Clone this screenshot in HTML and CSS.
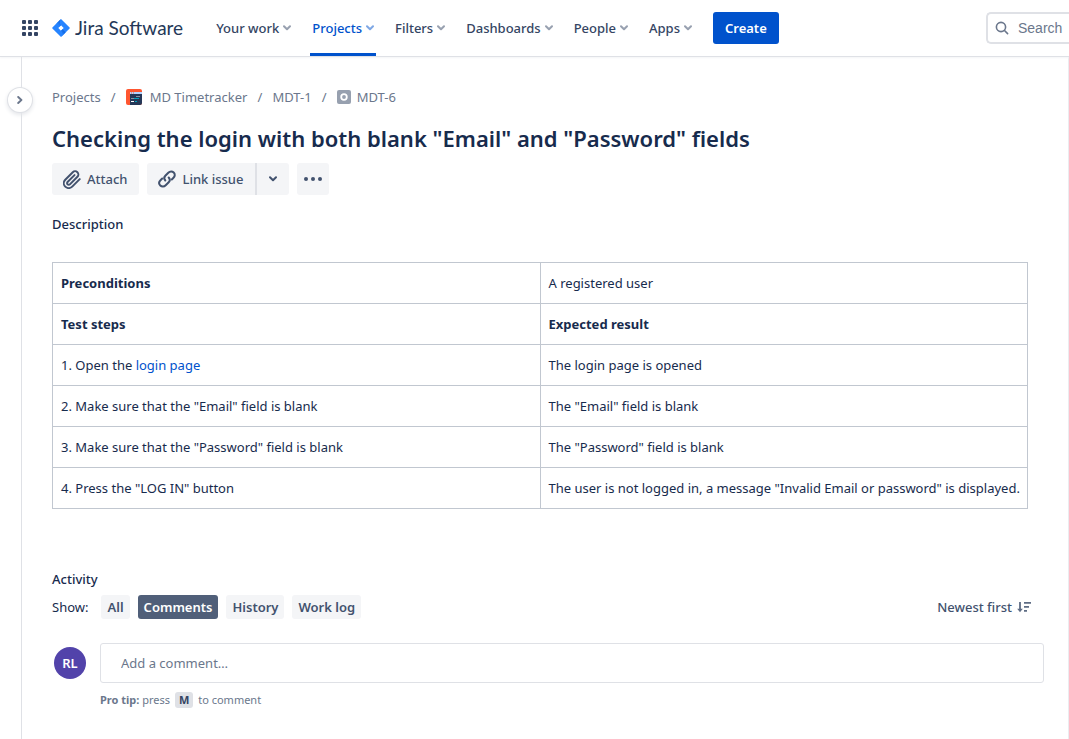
FILE: index.html
```html
<!DOCTYPE html>
<html lang="en">
<head>
<meta charset="utf-8">
<title>MDT-6 - Jira Software</title>
<link rel="stylesheet" href="styles.css">
</head>
<body>
<header class="topbar">
  <button class="switcher" aria-label="Switch to another product">
    <svg width="16" height="16" viewBox="0 0 16 16" fill="#344563"><rect width="4" height="4" rx="1"/><rect x="6" width="4" height="4" rx="1"/><rect x="12" width="4" height="4" rx="1"/><rect y="6" width="4" height="4" rx="1"/><rect x="6" y="6" width="4" height="4" rx="1"/><rect x="12" y="6" width="4" height="4" rx="1"/><rect y="12" width="4" height="4" rx="1"/><rect x="6" y="12" width="4" height="4" rx="1"/><rect x="12" y="12" width="4" height="4" rx="1"/></svg>
  </button>
  <a class="brand" href="#">
    <svg width="18" height="18" viewBox="0 0 18 18"><defs><linearGradient id="g1" x1="1" y1="0" x2="0.4" y2="0.8"><stop offset="0" stop-color="#0052cc"/><stop offset="1" stop-color="#2684ff"/></linearGradient></defs><path d="M9 0 17.6 8.4Q18 9 17.600 9.600L9 18 .4 9.600Q0 9 .4 8.400ZM9 6.300 6.300 9 9 11.700 11.700 9Z" fill="#2684ff" fill-rule="evenodd"/><path d="M9 6.300C7.300 4.600 7.300 2 9 0L4.400 4.600 7.600 7.700Z" fill="url(#g1)"/><path d="M9 11.700C10.700 13.400 10.700 16 9 18L13.600 13.400 10.400 10.300Z" fill="url(#g1)"/></svg>
    <span>Jira Software</span>
  </a>
  <nav class="nav">
    <button class="nav-item">Your work<svg class="chev" viewBox="0 0 8 6"><path d="M1 1.200 4 4.200 7 1.200"/></svg></button>
    <button class="nav-item active">Projects<svg class="chev" viewBox="0 0 8 6"><path d="M1 1.200 4 4.200 7 1.200"/></svg></button>
    <button class="nav-item">Filters<svg class="chev" viewBox="0 0 8 6"><path d="M1 1.200 4 4.200 7 1.200"/></svg></button>
    <button class="nav-item">Dashboards<svg class="chev" viewBox="0 0 8 6"><path d="M1 1.200 4 4.200 7 1.200"/></svg></button>
    <button class="nav-item">People<svg class="chev" viewBox="0 0 8 6"><path d="M1 1.200 4 4.200 7 1.200"/></svg></button>
    <button class="nav-item">Apps<svg class="chev" viewBox="0 0 8 6"><path d="M1 1.200 4 4.200 7 1.200"/></svg></button>
  </nav>
  <button class="create">Create</button>
  <label class="search">
    <svg width="14" height="14" viewBox="0 0 14 14" fill="none" stroke="#6b778c" stroke-width="1.600" stroke-linecap="round"><circle cx="6" cy="6" r="4.600"/><path d="M9.500 9.500 12.600 12.600"/></svg>
    <input type="text" placeholder="Search" aria-label="Search">
  </label>
</header>
<div class="page">
  <aside class="rail">
    <button class="expand" aria-label="Expand sidebar"><svg width="6" height="8" viewBox="0 0 6 8"><path d="M1.200 1 4.400 4 1.200 7" fill="none" stroke="#6b778c" stroke-width="1.900" stroke-linecap="round" stroke-linejoin="round"/></svg></button>
  </aside>
  <main class="issue">
    <nav class="crumbs" aria-label="Breadcrumbs">
      <a href="#">Projects</a><span class="sep">/</span>
      <a href="#"><svg class="project-icon" width="16" height="16" viewBox="0 0 16 16"><rect width="16" height="16" rx="2" fill="#ff5630"/><path d="M4 4H16V14a2 2 0 0 1-2 2H4Z" fill="#253858"/><path d="M4 3H16V5H4Z" fill="#b3d4ff"/><path d="M5 3.500H6V4.500H5ZM7 3.500H8V4.500H7Z" fill="#ff5630"/><path d="M10 7.500H14" stroke="#8993a4"/><path d="M5 9.500H8" stroke="#8993a4"/><path d="M8 9.500H13M9 12.500H11" stroke="#00a3bf"/><path d="M5 12.500H8" stroke="#fff"/></svg>MD Timetracker</a><span class="sep">/</span>
      <a href="#">MDT-1</a><span class="sep">/</span>
      <a class="subtask" href="#"><svg width="14" height="14" viewBox="0 0 14 14"><rect width="14" height="14" rx="2" fill="#97a0af"/><circle cx="7" cy="7" r="2.800" fill="none" stroke="#fff" stroke-width="1.800"/></svg>MDT-6</a>
    </nav>
    <h1>Checking the login with both blank "Email" and "Password" fields</h1>
    <div class="actions">
      <button class="btn"><svg width="18" height="19" viewBox="1 0 22 23" fill="none" stroke="#42526e" stroke-width="2.400" stroke-linecap="round" stroke-linejoin="round"><path d="M21.440 11.050l-9.190 9.190a6 6 0 0 1-8.490-8.490l9.190-9.190a4 4 0 0 1 5.660 5.660l-9.200 9.190a2 2 0 0 1-2.830-2.830l8.490-8.480"/></svg>Attach</button>
      <div class="split">
        <button class="btn"><svg width="18" height="18" viewBox="0 0 18 18" fill="none" stroke="#42526e" stroke-width="2" stroke-linecap="round" stroke-linejoin="round"><path d="M7.300 10.500C5.900 8.900 6 7 7.300 5.700L10.300 2.700C12 1 14.200 1 15.700 2.500S17.100 6.200 15.500 7.800L13.800 9.500"/><path d="M10.700 7.500C12.100 9.100 12 11 10.700 12.300L7.700 15.300C6 17 3.800 17 2.300 15.500S.9 11.800 2.500 10.200L4.200 8.500"/></svg>Link issue</button>
        <button class="btn more" aria-label="More link options"><svg class="chev dark" viewBox="0 0 8 6"><path d="M1 1.200 4 4.200 7 1.200"/></svg></button>
      </div>
      <button class="btn dots" aria-label="More actions"><svg width="18" height="4" viewBox="0 0 18 4" fill="#42526e"><circle cx="2" cy="2" r="2"/><circle cx="9" cy="2" r="2"/><circle cx="16" cy="2" r="2"/></svg></button>
    </div>
    <h2>Description</h2>
    <table class="steps">
      <tr><th>Preconditions</th><td>A registered user</td></tr>
      <tr><th>Test steps</th><th>Expected result</th></tr>
      <tr><td>1. Open the <a href="#">login page</a></td><td>The login page is opened</td></tr>
      <tr><td>2. Make sure that the "Email" field is blank</td><td>The "Email" field is blank</td></tr>
      <tr><td>3. Make sure that the "Password" field is blank</td><td>The "Password" field is blank</td></tr>
      <tr><td>4. Press the "LOG IN" button</td><td>The user is not logged in, a message "Invalid Email or password" is displayed.</td></tr>
    </table>
    <h2>Activity</h2>
    <div class="filters">
      <span class="show">Show:</span>
      <button class="chip">All</button>
      <button class="chip selected">Comments</button>
      <button class="chip">History</button>
      <button class="chip">Work log</button>
      <button class="sort">Newest first<svg width="14" height="12" viewBox="0 0 14 12" fill="none" stroke="#5e6c84" stroke-width="1.800"><path d="M3 1V9"/><path d="M.2 7.800H5.800L3 11.200Z" fill="#5e6c84" stroke="none"/><path d="M7 1.900H14M7 5.900H12M7 9.900H10"/></svg></button>
    </div>
    <div class="comment">
      <span class="avatar">RL</span>
      <div class="composer">
        <input type="text" placeholder="Add a comment…" aria-label="Add a comment">
        <p class="tip"><strong>Pro tip:</strong> press <kbd>M</kbd> to comment</p>
      </div>
    </div>
  </main>
</div>
</body>
</html>
```
FILE: styles.css
```css
* { box-sizing: border-box; }
body {
  margin: 0;
  min-height: 100vh;
  display: flex;
  flex-direction: column;
  font: 13px/20px "Noto Sans", "Open Sans", sans-serif;
  color: #172b4d;
  background: #fff;
}
button, input { font: inherit; color: inherit; border: 0; padding: 0; background: none; }
svg { display: block; flex: none; }
a { color: #0052cc; text-decoration: none; }

.topbar {
  position: relative;
  display: flex;
  align-items: center;
  height: 56px;
  padding-left: 22px;
  box-shadow: 0 1px 0 #dfe1e6, 0 2px 2px #f4f5f7;
}
.brand {
  display: flex;
  align-items: center;
  gap: 5px;
  margin-left: 14px;
  font: 19px/24px Lato, sans-serif;
  color: #253858;
}
.nav { display: flex; align-self: stretch; margin-left: 31px; gap: 17px; }
.nav-item {
  display: flex;
  align-items: center;
  gap: 4px;
  padding: 0 2px;
  font-weight: 500;
  color: #344563;
  white-space: nowrap;
}
.nav-item.active { color: #0052cc; box-shadow: inset 0 -3px #0052cc; }
.chev {
  width: 8px;
  height: 6px;
  fill: none;
  stroke: currentColor;
  stroke-width: 2;
  stroke-linecap: round;
  stroke-linejoin: round;
  opacity: .5;
}
.chev.dark { opacity: 1; }
.create {
  height: 32px;
  margin-left: 19px;
  padding: 0 12px;
  border-radius: 3px;
  background: #0052cc;
  color: #fff;
  font-weight: 600;
}
.search {
  display: flex;
  align-items: center;
  gap: 9px;
  width: 83px;
  height: 32px;
  margin-left: auto;
  padding-left: 7px;
  border: 2px solid #dfe1e6;
  border-right: 0;
  border-radius: 5px 0 0 5px;
}
.search input { width: 100%; min-width: 0; font: 14px/20px "Liberation Sans", sans-serif; }
input::placeholder { color: #6b778c; opacity: 1; }

.page { display: flex; flex: 1; border-right: 1px solid #ebecf0; }
.rail { position: relative; flex: none; width: 22px; border-right: 1px solid #dfe1e6; }
.expand {
  position: absolute;
  top: 32px;
  left: 8px;
  display: grid;
  place-items: center;
  width: 24px;
  height: 24px;
  border-radius: 50%;
  background: #fff;
  box-shadow: 0 0 0 1px #dfe1e6, 0 2px 4px 1px #e4e6ea;
}
.issue { flex: 1; min-width: 0; padding: 31px 24px 24px 30px; }

.crumbs { display: flex; align-items: center; }
.crumbs a { display: flex; align-items: center; gap: 8px; color: #6b778c; }
.crumbs .subtask { gap: 6px; }
.crumbs .sep { width: 25px; text-align: center; color: #6b778c; }
h1 { margin: 16px 0 10px; font-size: 22px; line-height: 30px; font-weight: 600; }
.actions { display: flex; gap: 8px; }
.btn {
  display: flex;
  align-items: center;
  gap: 6px;
  height: 32px;
  padding: 0 12px 0 11px;
  border-radius: 3px;
  background: #f4f5f7;
  color: #42526e;
  font-weight: 500;
}
.split { display: flex; }
.split .btn:first-child { border-radius: 3px 0 0 3px; border-right: 2px solid #dfe1e6; }
.split .more { width: 32px; justify-content: center; padding: 0; border-radius: 0 3px 3px 0; }
.dots { width: 32px; justify-content: center; padding: 0; }
h2 { margin: 19px 0 0; font-size: 13px; line-height: 20px; font-weight: 500; }

.steps {
  width: calc(100% - 16px);
  margin: 28px 0 60px;
  table-layout: fixed;
  border-collapse: collapse;
}
.steps th, .steps td {
  height: 41px;
  padding: 0 8px;
  border: 1px solid #c1c7d0;
  text-align: left;
  white-space: nowrap;
}
.steps th { font-weight: 700; }

.filters { display: flex; align-items: center; gap: 8px; margin-top: 6px; }
.show { margin-right: 5px; }
.chip { height: 24px; padding: 0 6px; border-radius: 3px; background: #f4f5f7; color: #42526e; font-weight: 600; }
.chip.selected { background: #505f79; color: #fff; }
.sort { display: flex; align-items: center; gap: 5px; margin: 0 13px 0 auto; color: #42526e; font-weight: 500; }

.comment { display: flex; gap: 14px; margin-top: 24px; padding-left: 2px; }
.avatar {
  flex: none;
  width: 32px;
  height: 32px;
  margin-top: 4px;
  border-radius: 50%;
  background: #5243aa;
  color: #fff;
  line-height: 32px;
  text-align: center;
  font-weight: 600;
}
.composer { flex: 1; }
.composer input { width: 100%; height: 40px; padding: 0 20px; border: 1px solid #dfe1e6; border-radius: 3px; }
.tip { margin: 7px 0 0; font-size: 11px; line-height: 20px; color: #6b778c; }
.tip strong { font-weight: 700; }
.tip kbd { display: inline-block; margin: 0 2px; padding: 0 4px; border-radius: 3px; background: #dfe1e6; color: #344563; font: bold 11px/16px "Noto Sans", sans-serif; }
```
